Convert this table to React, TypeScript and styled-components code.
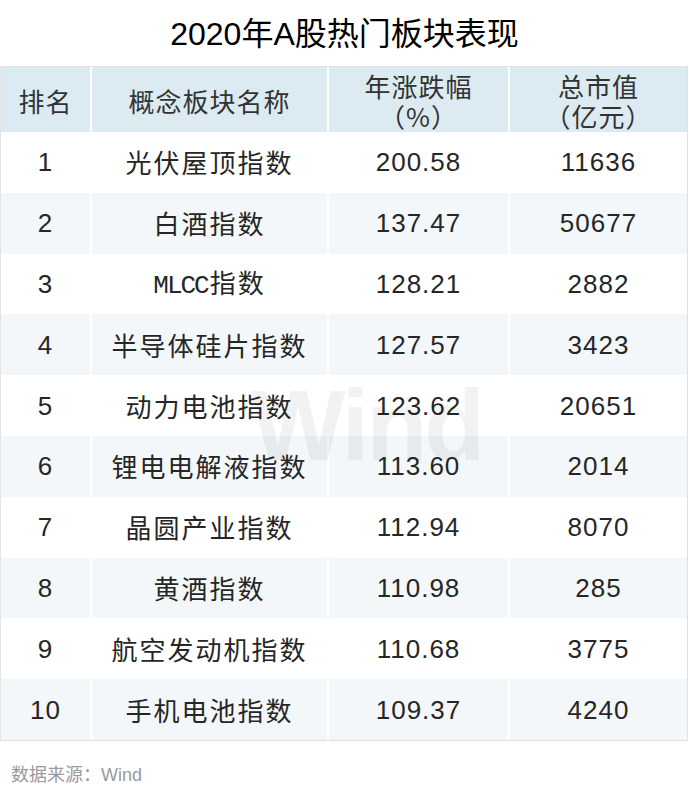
import React from 'react';
import styled, { createGlobalStyle } from 'styled-components';

const GlobalStyle = createGlobalStyle`
  html, body {
    margin: 0;
    padding: 0;
    background: #ffffff;
  }
  body {
    font-family: 'Liberation Sans', 'Noto Sans CJK SC', sans-serif;
    color: #333333;
  }
`;

const CJK = `'Noto Sans CJK SC', sans-serif`;
const NUM = `'Liberation Sans', 'Noto Sans CJK SC', sans-serif`;

const Page = styled.div`
  width: 689px;
  display: flex;
  flex-direction: column;
`;

const Title = styled.h1`
  margin: 0;
  padding: 16px 0 14px;
  line-height: 36px;
  font-family: ${NUM};
  font-size: 32px;
  font-weight: normal;
  color: #000000;
  text-align: center;
`;

const Table = styled.div`
  position: relative;
  width: 686px;
  border: 1px solid #e0e0e0;
  border-left-color: #e4e4e4;
  background: #ffffff;
`;

const Row = styled.div<{ $head?: boolean; $shade?: boolean }>`
  display: grid;
  grid-template-columns: 89px 235px 179px 1fr;
  column-gap: 2px;
  height: ${({ $head }) => ($head ? '65px' : '60.8px')};
  > * {
    background: ${({ $head, $shade }) =>
      $head ? '#dcebf2' : $shade ? '#f3f7f9' : '#ffffff'};
  }
`;

const Cell = styled.div<{ $cjk?: boolean }>`
  display: flex;
  flex-direction: column;
  align-items: center;
  justify-content: center;
  font-family: ${({ $cjk }) => ($cjk ? CJK : NUM)};
  font-size: 26px;
  line-height: 30px;
  color: #262626;
  letter-spacing: ${({ $cjk }) => ($cjk ? '2px' : '1px')};
  white-space: nowrap;
`;

const HeadCell = styled(Cell)`
  font-family: ${CJK};
  letter-spacing: 1px;
  color: #333333;
  padding-top: 2px;
`;

const Latin = styled.span`
  font-family: 'Liberation Mono', monospace;
  font-size: 26px;
  letter-spacing: -2px;
  margin-right: 2px;
`;

const Watermark = styled.div`
  position: absolute;
  left: 250px;
  top: 308px;
  font-family: 'Liberation Sans', sans-serif;
  font-weight: bold;
  font-size: 100px;
  line-height: 1;
  letter-spacing: -3px;
  color: rgba(0, 0, 0, 0.05);
  pointer-events: none;
  user-select: none;
`;

const Source = styled.div`
  margin-top: 22px;
  padding-left: 11px;
  font-family: ${NUM};
  font-size: 18px;
  line-height: 24px;
  color: #9a9a9a;
`;

type Item = { rank: number; name: React.ReactNode; change: string; cap: string };

const rows: Item[] = [
  { rank: 1, name: '光伏屋顶指数', change: '200.58', cap: '11636' },
  { rank: 2, name: '白酒指数', change: '137.47', cap: '50677' },
  { rank: 3, name: <><Latin>MLCC</Latin>指数</>, change: '128.21', cap: '2882' },
  { rank: 4, name: '半导体硅片指数', change: '127.57', cap: '3423' },
  { rank: 5, name: '动力电池指数', change: '123.62', cap: '20651' },
  { rank: 6, name: '锂电电解液指数', change: '113.60', cap: '2014' },
  { rank: 7, name: '晶圆产业指数', change: '112.94', cap: '8070' },
  { rank: 8, name: '黄酒指数', change: '110.98', cap: '285' },
  { rank: 9, name: '航空发动机指数', change: '110.68', cap: '3775' },
  { rank: 10, name: '手机电池指数', change: '109.37', cap: '4240' }
];

export default function App() {
  return (
    <Page>
      <GlobalStyle />
      <Title>2020年A股热门板块表现</Title>
      <Table>
        <Row $head>
          <HeadCell>排名</HeadCell>
          <HeadCell>概念板块名称</HeadCell>
          <HeadCell>
            <span>年涨跌幅</span>
            <span>（%）</span>
          </HeadCell>
          <HeadCell>
            <span>总市值</span>
            <span>（亿元）</span>
          </HeadCell>
        </Row>
        {rows.map((r, i) => (
          <Row key={r.rank} $shade={i % 2 === 1}>
            <Cell>{r.rank}</Cell>
            <Cell $cjk>
              <span>{r.name}</span>
            </Cell>
            <Cell>{r.change}</Cell>
            <Cell>{r.cap}</Cell>
          </Row>
        ))}
        <Watermark>Wind</Watermark>
      </Table>
      <Source>数据来源：Wind</Source>
    </Page>
  );
}
